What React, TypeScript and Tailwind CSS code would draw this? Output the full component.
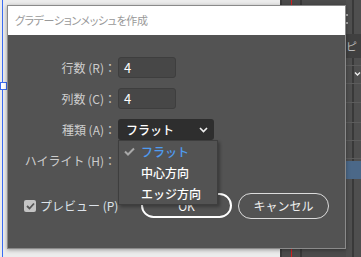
import React from "react";

const jp = { fontFamily: '"Noto Sans CJK JP", "Noto Sans", sans-serif' };

function Field({ label, children }: { label: string; children?: React.ReactNode }) {
  return (
    <div className="flex items-center h-[21px]">
      <div className="w-[110px] pr-[2px] text-right text-[12px] text-[#cdcdcd] whitespace-nowrap">{label}</div>
      {children}
    </div>
  );
}

function NumInput({ value }: { value: string }) {
  return (
    <div className="w-[58px] h-[21px] rounded-[3px] bg-[#474747] border border-[#3e3e3e] text-[13px] text-white pl-[5px] leading-[19px]">
      {value}
    </div>
  );
}

export default function App() {
  return (
    <div className="relative w-[361px] h-[257px] overflow-hidden bg-[#4b4b4b]" style={jp}>
      {/* canvas behind the dialog */}
      <div className="absolute left-0 top-0 w-[280px] h-[257px] bg-[#ececec]" />
      <div className="absolute left-[2px] top-0 w-[1px] h-[257px] bg-[#3b6cf2]" />
      <div className="absolute left-0 top-[82px] w-[7px] h-[8px] border border-[#3b6cf2] bg-white" />
      <div className="absolute left-[280px] top-0 w-[2px] h-[257px] bg-[#3a3a3a]" />
      <div className="absolute left-[291px] top-0 w-[1px] h-[257px] bg-[#d42020]" />
      <div className="absolute left-[300px] top-0 w-[2px] h-[257px] bg-[#383838]" />
      <div className="absolute left-[346px] top-0 w-[15px] h-[257px] bg-[#4f4f4f]" />
      <div className="absolute left-[352px] top-0 w-[2px] h-[257px] bg-[#393939]" />
      <div className="absolute left-[346px] top-[34px] w-[15px] h-[24px] bg-[#404040] text-[11px] text-[#bbb] leading-[24px]">ピ</div>
      <div className="absolute left-[346px] top-[14px] w-[2px] h-[2px] bg-[#aaa]" />
      <div className="absolute left-[346px] top-[22px] w-[2px] h-[2px] bg-[#aaa]" />
      {[65, 83, 102, 122, 140, 158].map((y) => (
        <div key={y} className="absolute left-[346px] w-[15px] h-[1px] bg-[#5c5c5c]" style={{ top: y }} />
      ))}
      <svg className="absolute left-[354px] top-[71px]" width="7" height="6" viewBox="0 0 7 6">
        <polyline points="1,1.5 3.5,4 6,1.5" fill="none" stroke="#eee" strokeWidth="1.4" />
      </svg>
      <div className="absolute left-[346px] top-[161px] w-[15px] h-[18px] bg-[#4b6888]" />

      {/* dialog */}
      <div className="absolute left-[7px] top-[5px] w-[339px] h-[244px] flex flex-col bg-[#535353] border border-[#8a8a8a] shadow-[0_1px_4px_rgba(0,0,0,0.35)]">
        <div className="h-[29px] bg-white flex items-center pl-[7px] text-[11px] text-[#999] tracking-[-0.4px]" style={{ fontFeatureSettings: '"palt"' }}>
          グラデーションメッシュを作成
        </div>
        <div className="relative flex-1 flex flex-col pt-[22px]">
          <div className="flex flex-col gap-[10px]">
            <Field label="行数 (R)：">
              <NumInput value="4" />
            </Field>
            <Field label="列数 (C)：">
              <NumInput value="4" />
            </Field>
            <Field label="種類 (A)：">
              <div className="w-[96px] h-[21px] rounded-[3px] bg-[#2e2e2e] flex items-center justify-between pl-[8px] pr-[6px] text-[12px] font-medium text-white">
                <span>フラット</span>
                <svg width="9" height="6" viewBox="0 0 9 6">
                  <polyline points="1,1 4.5,4.5 8,1" fill="none" stroke="#f0f0f0" strokeWidth="1.6" />
                </svg>
              </div>
            </Field>
            <Field label="ハイライト (H)：" />
          </div>

          <div className="flex items-center mt-[22px] pl-[16px]">
            <div className="w-[12px] h-[12px] rounded-[2px] bg-[#c4c4c4] flex items-center justify-center">
              <svg width="9" height="8" viewBox="0 0 9 8">
                <polyline points="1,4 3.5,6.5 8,1.5" fill="none" stroke="#555" strokeWidth="1.8" />
              </svg>
            </div>
            <span className="ml-[4px] text-[12px] text-[#dde3ea] whitespace-nowrap">プレビュー (P)</span>
            <div className="ml-auto flex gap-[6px] pr-[16px]">
              <button className="w-[91px] h-[25px] rounded-full border-2 border-white text-[12px] text-white">OK</button>
              <button className="w-[91px] h-[26px] rounded-full border-[1.5px] border-[#dcdcdc] text-[12px] text-[#eee]">キャンセル</button>
            </div>
          </div>

          {/* open select menu */}
          <div className="absolute z-10 left-[110px] top-[105px] w-[100px] h-[65px] bg-[#535353] border border-[#3e3e3e] shadow-[2px_2px_3px_rgba(0,0,0,0.3)] flex flex-col text-[12px] font-medium">
            <div className="h-[21px] flex items-center">
              <svg className="ml-[5px] mr-[6px]" width="11" height="9" viewBox="0 0 11 9">
                <polyline points="1,4.5 4,7.5 10,1.5" fill="none" stroke="#a8a8a8" strokeWidth="2" />
              </svg>
              <span className="text-[#4f9bf0]">フラット</span>
            </div>
            <div className="h-[21px] flex items-center pl-[22px] text-white">中心方向</div>
            <div className="h-[21px] flex items-center pl-[22px] text-white">エッジ方向</div>
          </div>
        </div>
      </div>
    </div>
  );
}
